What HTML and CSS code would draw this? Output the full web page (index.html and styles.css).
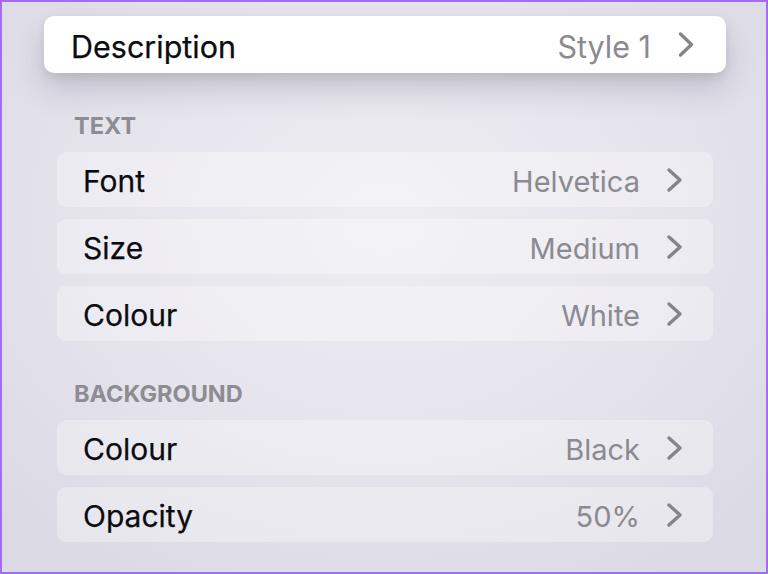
FILE: index.html
```html
<!DOCTYPE html>
<html lang="en">
<head>
    <meta charset="UTF-8">
    <meta name="viewport" content="width=device-width, initial-scale=1.0">
    <title>Subtitle Style</title>
    <link rel="stylesheet" href="styles.css">
</head>
<body>
    <div class="screen">
        <div class="focus-card">
            <span class="label">Description</span>
            <span class="value">Style 1</span>
            <svg class="chevron" width="18" height="27" viewBox="0 0 18 27"><path d="M3.5 3 L14.5 13.5 L3.5 24"/></svg>
        </div>

        <div class="section">
            <div class="section-title">TEXT</div>
            <div class="rows">
                <div class="row">
                    <span class="label">Font</span>
                    <span class="value">Helvetica</span>
                    <svg class="chevron" width="17" height="26" viewBox="0 0 17 26"><path d="M3 3 L14 13 L3 23"/></svg>
                </div>
                <div class="row">
                    <span class="label">Size</span>
                    <span class="value">Medium</span>
                    <svg class="chevron" width="17" height="26" viewBox="0 0 17 26"><path d="M3 3 L14 13 L3 23"/></svg>
                </div>
                <div class="row">
                    <span class="label">Colour</span>
                    <span class="value">White</span>
                    <svg class="chevron" width="17" height="26" viewBox="0 0 17 26"><path d="M3 3 L14 13 L3 23"/></svg>
                </div>
            </div>
        </div>

        <div class="section">
            <div class="section-title">BACKGROUND</div>
            <div class="rows">
                <div class="row">
                    <span class="label">Colour</span>
                    <span class="value">Black</span>
                    <svg class="chevron" width="17" height="26" viewBox="0 0 17 26"><path d="M3 3 L14 13 L3 23"/></svg>
                </div>
                <div class="row">
                    <span class="label">Opacity</span>
                    <span class="value">50%</span>
                    <svg class="chevron" width="17" height="26" viewBox="0 0 17 26"><path d="M3 3 L14 13 L3 23"/></svg>
                </div>
            </div>
        </div>
    </div>
</body>
</html>
```

FILE: styles.css
```css
html, body {
    margin: 0;
    padding: 0;
}

body {
    font-family: Inter, "Liberation Sans", Arial, sans-serif;
    width: 768px;
    height: 574px;
    overflow: hidden;
}

.screen {
    box-sizing: border-box;
    width: 768px;
    height: 574px;
    border: 2px solid #a36cf2;
    background: radial-gradient(ellipse 70% 75% at 50% 38%, #eeedf3 0%, #e5e3ec 55%, #dbd9e4 100%);
    padding: 14px 0 0 42px;
}

.focus-card {
    display: flex;
    align-items: center;
    box-sizing: border-box;
    width: 682px;
    height: 57px;
    padding: 0 31px 0 27px;
    background: #ffffff;
    border-radius: 10px;
    box-shadow: 0 16px 30px rgba(70, 68, 90, 0.22), 0 4px 8px rgba(70, 68, 90, 0.10);
}

.focus-card .label,
.focus-card .value {
    font-size: 30.5px;
}

.label {
    flex: 1;
    color: #0c0c10;
    font-size: 30px;
    padding-top: 3px;
    -webkit-text-stroke: 0.25px #0c0c10;
}

.value {
    color: #8b8a91;
    font-size: 29px;
    padding-top: 3px;
    margin-right: 26px;
}

.chevron {
    display: block;
}

.chevron path {
    fill: none;
    stroke: #85848b;
    stroke-width: 3.4;
    stroke-linecap: round;
    stroke-linejoin: round;
}

.section {
    margin-left: 13px;
    width: 656px;
}

.section-title {
    font-size: 23.5px;
    font-weight: 700;
    color: #8d8c93;
    line-height: 24px;
    padding-left: 17px;
    margin: 41px 0 14px;
}

.rows {
    display: flex;
    flex-direction: column;
    gap: 12px;
}

.row {
    display: flex;
    align-items: center;
    box-sizing: border-box;
    height: 55px;
    padding: 0 30px 0 26px;
    background: rgba(255, 255, 255, 0.32);
    border-radius: 9px;
}
```
